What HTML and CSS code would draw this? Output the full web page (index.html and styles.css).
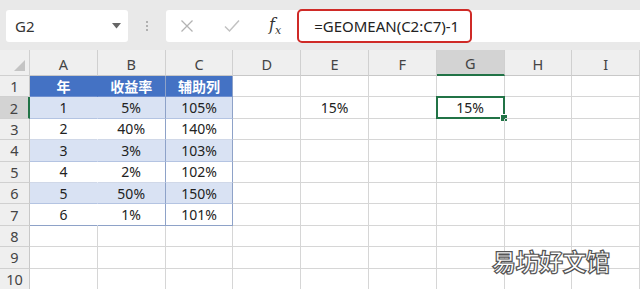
FILE: index.html
```html
<!DOCTYPE html>
<html lang="zh">
<head>
    <meta charset="UTF-8">
    <title>GEOMEAN</title>
    <link rel="stylesheet" href="styles.css">
</head>
<body>
    <div class="formula-bar">
        <div class="name-box">
            <span>G2</span>
            <svg class="caret" width="9" height="6" viewBox="0 0 9 6"><path d="M0 0 L9 0 L4.5 5.5 Z" fill="#666"/></svg>
        </div>
        <div class="grip"><i></i><i></i><i></i></div>
        <div class="formula-box">
            <svg class="icon icon-x" width="14" height="14" viewBox="0 0 14 14"><path d="M1.5 1.5 L12.5 12.5 M12.5 1.5 L1.5 12.5" stroke="#b3b3b3" stroke-width="1.3" fill="none"/></svg>
            <svg class="icon icon-ok" width="16" height="14" viewBox="0 0 16 14"><path d="M1 7.5 L5.5 12 L15 1.5" stroke="#c2c2c2" stroke-width="1.5" fill="none"/></svg>
            <span class="fx">f<sub>x</sub></span>
            <div class="formula-text">=GEOMEAN(C2:C7)-1</div>
        </div>
    </div>

    <div class="sheet">
        <div class="corner"><span class="tri"></span></div>
        <div class="col-head">A</div>
        <div class="col-head">B</div>
        <div class="col-head">C</div>
        <div class="col-head">D</div>
        <div class="col-head">E</div>
        <div class="col-head">F</div>
        <div class="col-head active">G</div>
        <div class="col-head">H</div>
        <div class="col-head">I</div>

        <div class="row-head">1</div>
        <div class="cell t-head">年</div>
        <div class="cell t-head">收益率</div>
        <div class="cell t-head t-c">辅助列</div>
        <div class="cell"></div><div class="cell"></div><div class="cell"></div><div class="cell"></div><div class="cell"></div><div class="cell"></div>

        <div class="row-head active">2</div>
        <div class="cell band">1</div>
        <div class="cell band">5%</div>
        <div class="cell band t-c">105%</div>
        <div class="cell"></div>
        <div class="cell">15%</div>
        <div class="cell"></div>
        <div class="cell selected">15%</div>
        <div class="cell"></div><div class="cell"></div>

        <div class="row-head">3</div>
        <div class="cell plain">2</div>
        <div class="cell plain">40%</div>
        <div class="cell plain t-c">140%</div>
        <div class="cell"></div><div class="cell"></div><div class="cell"></div><div class="cell"></div><div class="cell"></div><div class="cell"></div>

        <div class="row-head">4</div>
        <div class="cell band">3</div>
        <div class="cell band">3%</div>
        <div class="cell band t-c">103%</div>
        <div class="cell"></div><div class="cell"></div><div class="cell"></div><div class="cell"></div><div class="cell"></div><div class="cell"></div>

        <div class="row-head">5</div>
        <div class="cell plain">4</div>
        <div class="cell plain">2%</div>
        <div class="cell plain t-c">102%</div>
        <div class="cell"></div><div class="cell"></div><div class="cell"></div><div class="cell"></div><div class="cell"></div><div class="cell"></div>

        <div class="row-head">6</div>
        <div class="cell band">5</div>
        <div class="cell band">50%</div>
        <div class="cell band t-c">150%</div>
        <div class="cell"></div><div class="cell"></div><div class="cell"></div><div class="cell"></div><div class="cell"></div><div class="cell"></div>

        <div class="row-head">7</div>
        <div class="cell plain t-last">6</div>
        <div class="cell plain t-last">1%</div>
        <div class="cell plain t-c t-last">101%</div>
        <div class="cell"></div><div class="cell"></div><div class="cell"></div><div class="cell"></div><div class="cell"></div><div class="cell"></div>

        <div class="row-head">8</div>
        <div class="cell"></div><div class="cell"></div><div class="cell"></div><div class="cell"></div><div class="cell"></div><div class="cell"></div><div class="cell"></div><div class="cell"></div><div class="cell"></div>

        <div class="row-head">9</div>
        <div class="cell"></div><div class="cell"></div><div class="cell"></div><div class="cell"></div><div class="cell"></div><div class="cell"></div><div class="cell"></div><div class="cell"></div><div class="cell"></div>

        <div class="row-head">10</div>
        <div class="cell"></div><div class="cell"></div><div class="cell"></div><div class="cell"></div><div class="cell"></div><div class="cell"></div><div class="cell"></div><div class="cell"></div><div class="cell"></div>
    </div>

    <div class="watermark">易坊好文馆</div>
</body>
</html>
```

FILE: styles.css
```css
body {
    margin: 0;
    width: 640px;
    height: 289px;
    overflow: hidden;
    background: #fff;
    font-family: "Noto Sans", "Noto Sans CJK SC", sans-serif;
    color: #222;
    position: relative;
}
.formula-bar {
    height: 50px;
    background: #e9e9e9;
    display: flex;
    align-items: flex-start;
    padding: 10px 0 0 6px;
    box-sizing: border-box;
}
.name-box {
    width: 122px;
    height: 32px;
    background: #fff;
    border-radius: 3px;
    display: flex;
    align-items: center;
    justify-content: space-between;
    padding: 0 7px 0 9px;
    box-sizing: border-box;
    font-size: 15px;
    color: #333;
}
.grip {
    width: 38px;
    height: 32px;
    display: flex;
    flex-direction: column;
    align-items: center;
    justify-content: center;
    gap: 2px;
}
.grip i {
    width: 2px;
    height: 2px;
    background: #b0b0b0;
}
.formula-box {
    flex: 1;
    height: 32px;
    background: #fff;
    border-radius: 3px 0 0 3px;
    display: flex;
    align-items: center;
    padding-left: 14px;
}
.icon-x {
    margin-right: 30px;
}
.icon-ok {
    margin-right: 29px;
}
.fx {
    font-family: "DejaVu Serif", "Liberation Serif", serif;
    font-style: italic;
    font-size: 16px;
    color: #333;
}
.fx sub {
    font-size: 11px;
}
.formula-text {
    margin-left: 16px;
    margin-top: -1px;
    height: 34px;
    width: 175px;
    border: 2.5px solid #cf2a27;
    border-radius: 5px;
    box-sizing: border-box;
    padding-left: 15px;
    display: flex;
    align-items: center;
    font-size: 15px;
    color: #222;
}
.sheet {
    display: grid;
    grid-template-columns: 30px repeat(9, 67.8px);
    grid-template-rows: 26px repeat(10, 21.4px);
    font-size: 14px;
}
.corner, .col-head, .row-head {
    background: #efefef;
    color: #444;
    display: flex;
    align-items: center;
    justify-content: center;
    box-sizing: border-box;
}
.corner {
    border-right: 1px solid #d0d0d0;
    border-bottom: 1px solid #d0d0d0;
    position: relative;
}
.tri {
    position: absolute;
    right: 4px;
    bottom: 4px;
    width: 0;
    height: 0;
    border-left: 11px solid transparent;
    border-bottom: 11px solid #c4c4c4;
}
.col-head {
    border-right: 1px solid #d0d0d0;
    border-bottom: 1px solid #c8c8c8;
    font-size: 14.5px;
    padding-top: 2px;
}
.col-head.active {
    background: #d3d3d3;
    border-bottom: 2px solid #217346;
}
.row-head {
    border-right: 1px solid #c8c8c8;
    border-bottom: 1px solid #d0d0d0;
    font-size: 14.5px;
}
.row-head.active {
    background: #d3d3d3;
    border-right: 2px solid #217346;
}
.cell {
    border-right: 1px solid #d6d6d6;
    border-bottom: 1px solid #d6d6d6;
    display: flex;
    align-items: center;
    justify-content: center;
    box-sizing: border-box;
    position: relative;
}
.t-head {
    background: #4472c4;
    color: #fff;
    font-weight: bold;
    border-right-color: #4472c4;
    border-bottom-color: #6f8fcf;
}
.band {
    background: #d9e2f3;
    border-right-color: #d9e2f3;
    border-bottom-color: #b4c4e2;
}
.plain {
    border-right-color: #fff;
    border-bottom-color: #d0d8e8;
}
.t-c {
    border-left: 1px solid #8ea2c8;
    border-right: 1px solid #8ea2c8;
    margin-left: -1px;
}
.t-last {
    border-bottom: 1px solid #8ea2c8;
}
.selected {
    border: 2px solid #217346;
    margin: -1px 0 0 -1px;
}
.selected::after {
    content: "";
    position: absolute;
    right: -5px;
    bottom: -5px;
    width: 6px;
    height: 6px;
    background: #217346;
    border: 1px solid #fff;
}
.watermark {
    position: absolute;
    left: 492px;
    top: 243px;
    font-family: "Noto Sans CJK SC", sans-serif;
    font-size: 24px;
    font-weight: 700;
    color: #fff;
    -webkit-text-stroke: 1.2px #555;
    letter-spacing: -0.5px;
}
```
